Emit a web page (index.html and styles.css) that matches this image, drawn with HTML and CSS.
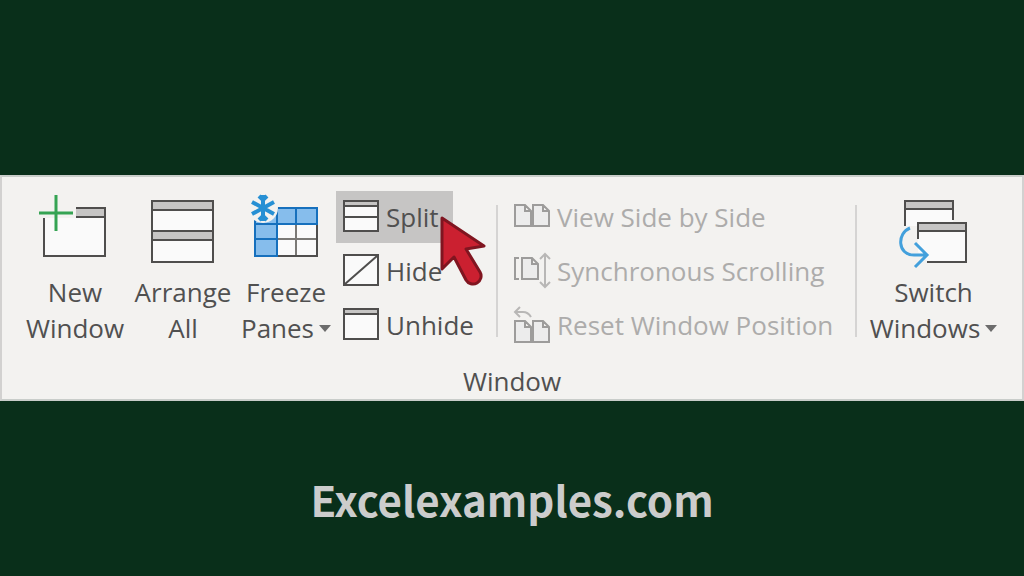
FILE: index.html
```html
<!DOCTYPE html>
<html lang="en">
<head>
    <meta charset="UTF-8">
    <meta name="viewport" content="width=device-width, initial-scale=1.0">
    <title>Excelexamples.com</title>
    <link rel="stylesheet" href="styles.css">
</head>
<body>

    <section class="ribbon" aria-labelledby="group-name">
        <div class="tools">
            <button class="big-btn" type="button">
                <svg class="big-icon" viewBox="0 0 72 83">
                    <path class="paper" d="M5 27H37V17H66V65H5Z"/>
                    <path class="bar" d="M37 17H66V26H37Z"/>
                    <path class="line" d="M5 27V65H66V17H37M37 26H66"/>
                    <path class="plus" d="M17 4V40M0 22H34"/>
                </svg>
                <span>New</span>
                <span>Window</span>
            </button>

            <button class="big-btn" type="button">
                <svg class="big-icon" viewBox="0 0 72 83">
                    <path class="paper" d="M5 10H66V71H5Z"/>
                    <path class="bar" d="M5 10H66V19H5ZM5 40H66V49H5Z"/>
                    <path class="line" d="M5 10H66V71H5ZM5 19H66M5 40H66M5 49H66"/>
                </svg>
                <span>Arrange</span>
                <span>All</span>
            </button>

            <button class="big-btn" type="button">
                <svg class="big-icon" viewBox="0 0 72 83">
                    <path class="paper" d="M5 17H67V65H5Z"/>
                    <path class="cell" d="M5 17H67V33H27V65H5Z"/>
                    <path class="thin" d="M46 33V65M27 48H67"/>
                    <path class="line" d="M67 33V65H27"/>
                    <path class="blue" d="M5 17H67V33H5M5 17V65H27V17M46 17V33M5 48H27M5 65H28"/>
                    <circle class="halo" cx="13" cy="17" r="15"/>
                    <path class="snow" d="M13 4V30M2 11L24 23M2 23L24 11M9 5L13 9L17 5M9 29L13 25L17 29"/>
                </svg>
                <span>Freeze</span>
                <span class="menu">Panes</span>
            </button>

            <div class="list">
                <button class="small-btn active" type="button">
                    <svg class="small-icon" viewBox="0 0 36 36">
                        <path class="paper" d="M1 2H35V32H1Z"/>
                        <path class="bar" d="M1 2H35V7H1Z"/>
                        <path class="line" d="M1 2H35V32H1ZM1 7H35M1 18H35"/>
                    </svg>
                    Split
                </button>
                <button class="small-btn" type="button">
                    <svg class="small-icon" viewBox="0 0 36 36">
                        <path class="paper" d="M1 2H35V32H1Z"/>
                        <path class="line" d="M1 2H35V32H1ZM2 31L34 3"/>
                    </svg>
                    Hide
                </button>
                <button class="small-btn" type="button">
                    <svg class="small-icon" viewBox="0 0 36 36">
                        <path class="paper" d="M1 2H35V32H1Z"/>
                        <path class="bar" d="M1 2H35V7H1Z"/>
                        <path class="line" d="M1 2H35V32H1ZM1 7H35"/>
                    </svg>
                    Unhide
                </button>

                <svg class="cursor" viewBox="0 0 48 72">
                    <path d="M3 3L45 31L27 34L41 57A8 8 0 0 1 27 65L15 42L3 54Z"/>
                </svg>
            </div>

            <div class="list divided">
                <button class="small-btn" type="button" disabled>
                    <svg class="small-icon" viewBox="0 0 36 36">
                        <path class="page" d="M1 6H11L17 12V27H1ZM11 6V12H17M19 6H29L35 12V27H19ZM29 6V12H35"/>
                    </svg>
                    View Side by Side
                </button>
                <button class="small-btn" type="button" disabled>
                    <svg class="small-icon" viewBox="0 0 36 36">
                        <path class="page" d="M8 5H18L24 11V26H8ZM18 5V11H24"/>
                        <path class="page-line" d="M5 5H1V26H5"/>
                        <path class="arrow" d="M31 1V34M26 6L31 1L36 6M26 29L31 34L36 29"/>
                    </svg>
                    Synchronous Scrolling
                </button>
                <button class="small-btn" type="button" disabled>
                    <svg class="small-icon" viewBox="0 0 36 36">
                        <path class="page" d="M1 14H11L17 20V35H1ZM11 14V20H17M19 14H29L35 20V35H19ZM29 14V20H35"/>
                        <path class="arrow" d="M6 0L1 5L6 10M1 5H9Q14 5 17 10"/>
                    </svg>
                    Reset Window Position
                </button>
            </div>

            <button class="big-btn divided" type="button">
                <svg class="big-icon" viewBox="0 0 72 83">
                    <path class="paper" d="M7 10H55V32H20V35H7Z"/>
                    <path class="bar" d="M7 10H55V18H7Z"/>
                    <path class="line" d="M7 35V10H55V29M7 18H55"/>
                    <path class="paper" d="M20 32H68V71H30L20 61Z"/>
                    <path class="bar" d="M20 32H68V40H20Z"/>
                    <path class="line" d="M20 48V32H68V71H29M20 40H68"/>
                    <path class="switch" d="M12 37C-1 42 -1 64 16 64H29M17 52L29 64L17 76"/>
                </svg>
                <span>Switch</span>
                <span class="menu">Windows</span>
            </button>
        </div>
        <h2 class="group-name" id="group-name">Window</h2>
    </section>

    <footer class="site">Excelexamples.com</footer>

</body>
</html>
```
FILE: styles.css
```css
* {
    margin: 0;
    padding: 0;
    box-sizing: border-box;
}

body {
    min-height: 100vh;
    display: grid;
    grid-template-rows: 1fr auto 1fr;
    background: #092f1a;
    font-family: "Open Sans", "Noto Sans", sans-serif;
}

/* Ribbon group */
.ribbon {
    grid-row: 2;
    padding-top: 14px;
    background: #f3f2f0;
    border: 2px solid #d2d1d0;
    border-top-color: #c9cdca;
    border-bottom-color: #c9cdca;
    color: #505050;
}

.tools {
    display: grid;
    grid-template-columns: 110fr 106fr 100fr 160fr 359fr 157fr;
    padding: 0 10px 0 18px;
}

button {
    background: none;
    border: none;
    color: inherit;
    font-family: inherit;
    font-size: 26px;
    white-space: nowrap;
    cursor: pointer;
}

button:disabled {
    color: #adacab;
    cursor: default;
}

.big-btn {
    display: flex;
    flex-direction: column;
    align-items: center;
    line-height: 36px;
}

.big-icon {
    width: 72px;
    height: 83px;
}

.menu {
    display: flex;
    align-items: center;
    gap: 5px;
}

.menu::after {
    content: "";
    border: 6px solid transparent;
    border-top: 7px solid #6c6c6c;
    border-bottom: none;
}

.list {
    position: relative;
    display: flex;
    flex-direction: column;
    align-items: flex-start;
    gap: 2px;
}

.small-btn {
    display: flex;
    align-items: center;
    gap: 7px;
    height: 52px;
    padding: 0 14px 0 7px;
}

.small-icon {
    width: 36px;
    height: 36px;
}

.active {
    background: #c6c5c4;
}

.divided {
    position: relative;
}

.list.divided {
    padding-left: 11px;
}

.divided::before {
    content: "";
    position: absolute;
    left: 0;
    top: 14px;
    width: 2px;
    height: 132px;
    background: #d5d4d3;
}

.group-name {
    margin-top: 12px;
    font-size: 26px;
    font-weight: 400;
    line-height: 36px;
    text-align: center;
}

/* Mouse pointer over the Split button */
.cursor {
    position: absolute;
    left: 103px;
    top: 24px;
    width: 48px;
    height: 72px;
    fill: #cb2030;
    stroke: #801520;
    stroke-width: 3;
    stroke-linejoin: round;
    pointer-events: none;
}

/* Icon parts */
svg {
    fill: none;
    overflow: visible;
    flex-shrink: 0;
}

.paper {
    fill: #fafafa;
}

.bar {
    fill: #c6c5c4;
}

.line {
    stroke: #4f4e4d;
    stroke-width: 2;
}

.thin {
    stroke: #7b7976;
    stroke-width: 2;
}

.plus {
    stroke: #35a353;
    stroke-width: 3;
}

.cell {
    fill: #86bdec;
}

.blue {
    stroke: #1670bd;
    stroke-width: 2;
}

.halo {
    fill: #f3f2f0;
}

.snow {
    stroke: #2790d4;
    stroke-width: 4;
}

.switch {
    stroke: #43a0dc;
    stroke-width: 3;
}

.page {
    fill: #ececec;
    stroke: #9d9c9b;
    stroke-width: 2;
}

.page-line {
    stroke: #9d9c9b;
    stroke-width: 2;
}

.arrow {
    stroke: #b8b7b6;
    stroke-width: 2;
}

.site {
    grid-row: 3;
    align-self: center;
    padding-top: 20px;
    color: #cccccc;
    font-family: "Noto Sans CJK SC", sans-serif;
    font-size: 42px;
    font-weight: 700;
    line-height: 60px;
    text-align: center;
}
```
